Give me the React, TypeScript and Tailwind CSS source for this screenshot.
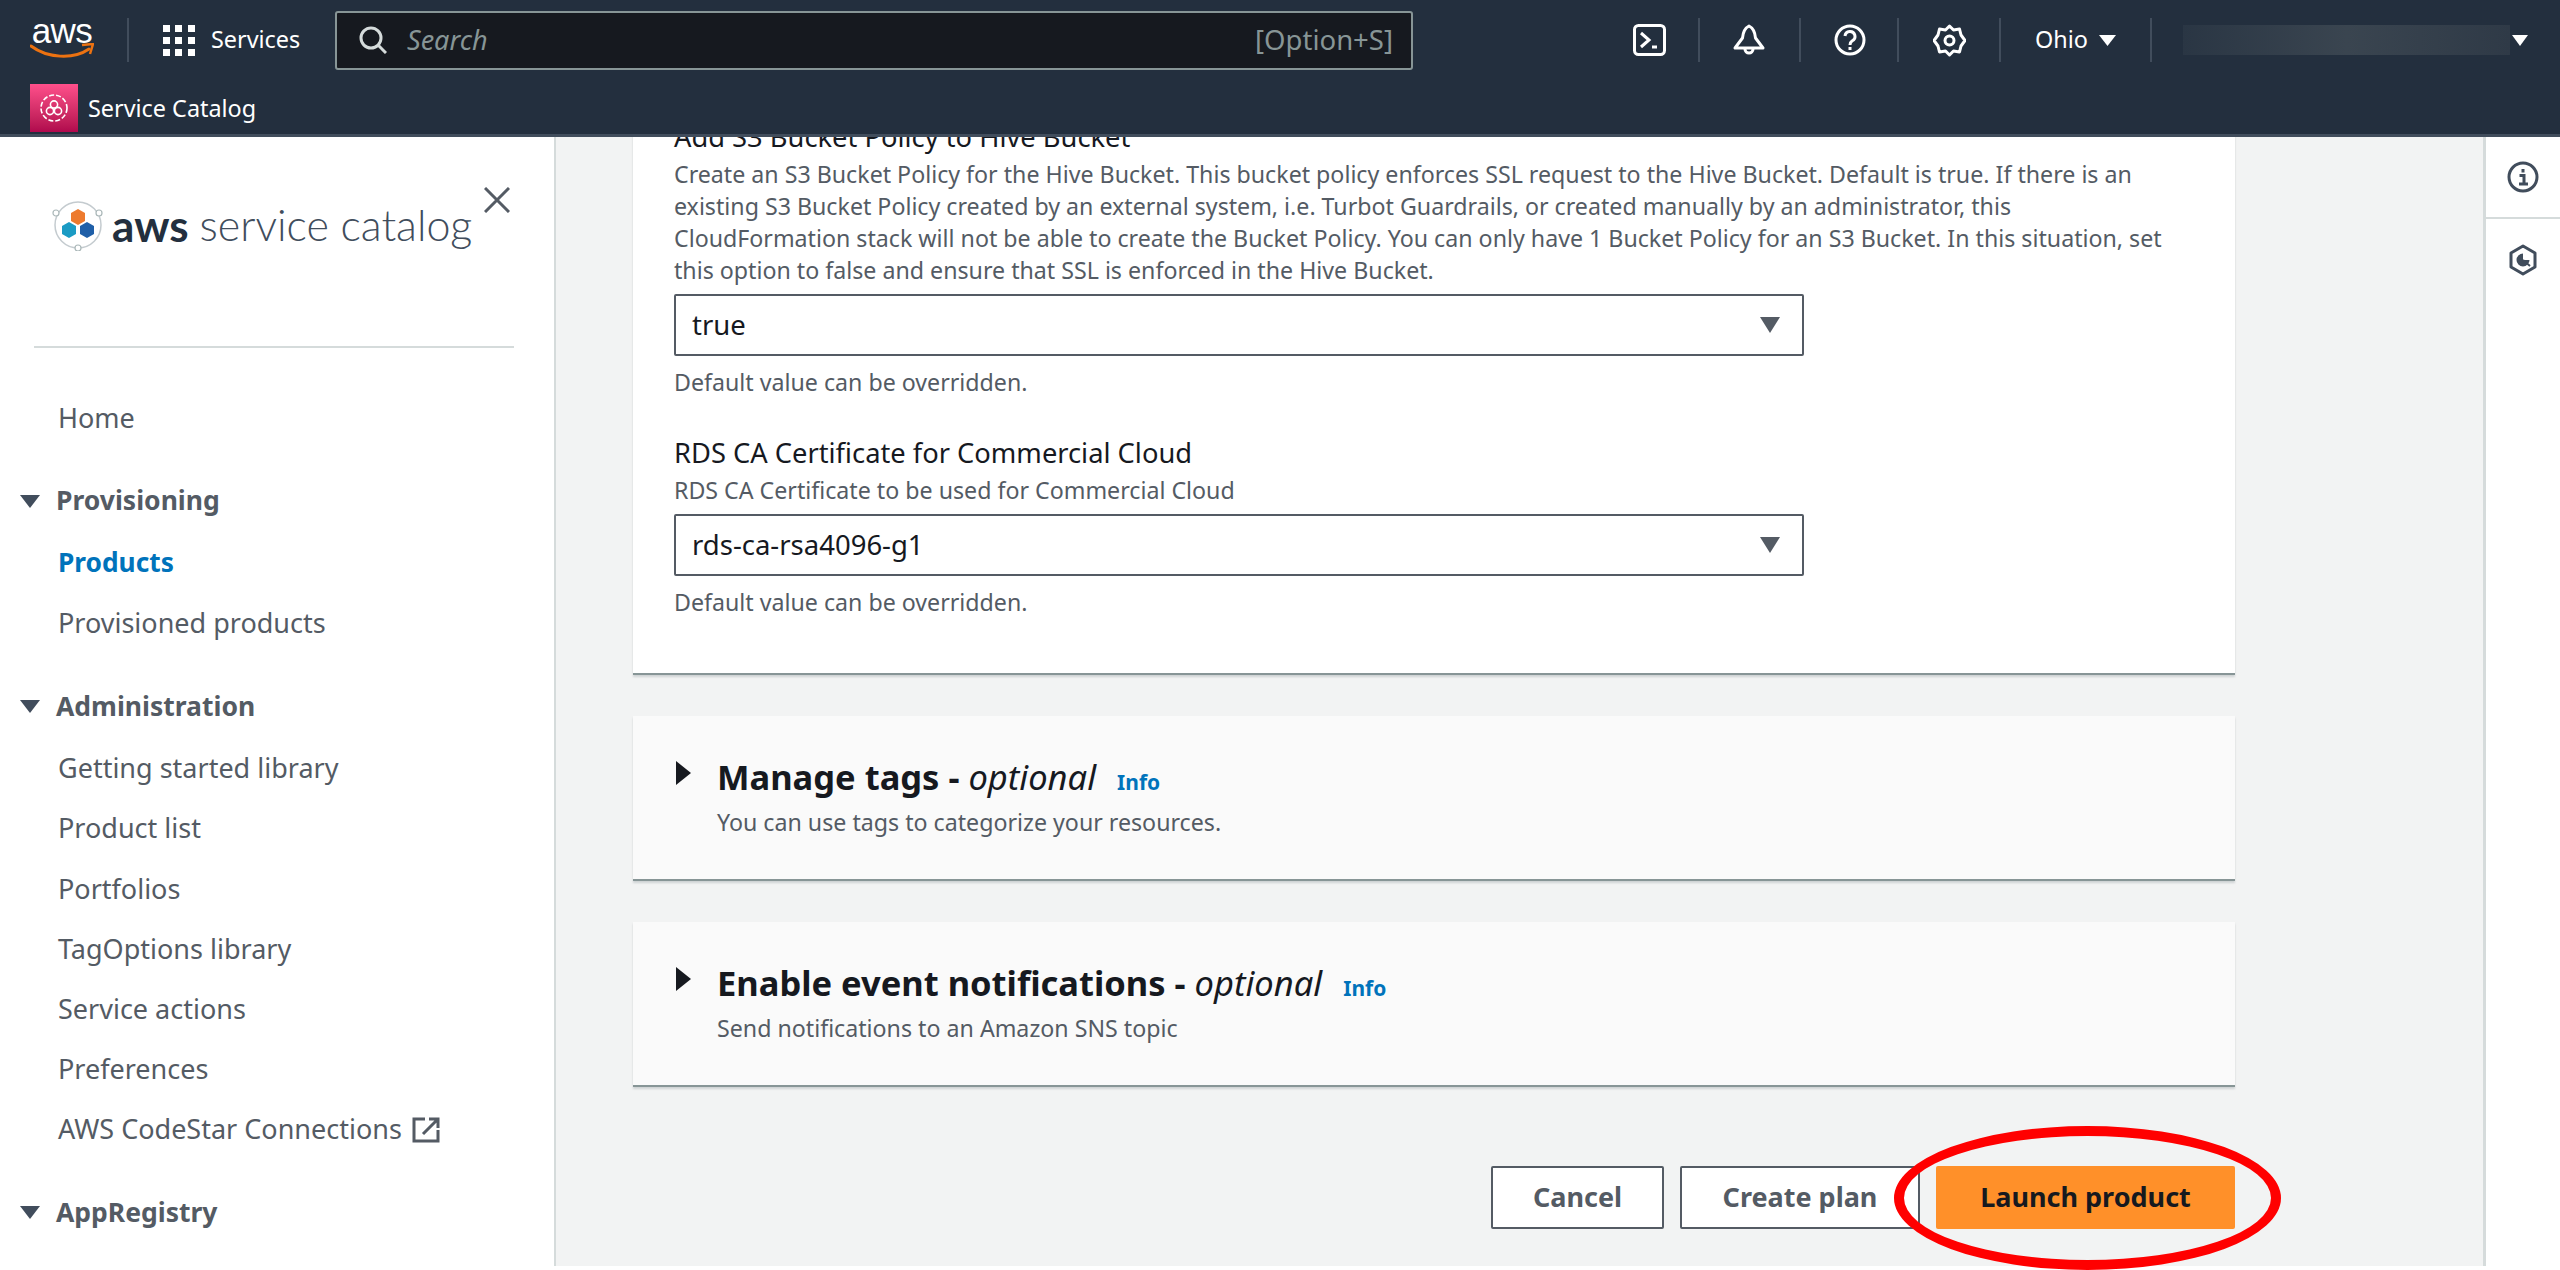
import React from 'react';

const sans = "font-['Noto_Sans',sans-serif]";

const navGroups = [
  { title: 'Provisioning', items: ['Products', 'Provisioned products'] },
  {
    title: 'Administration',
    items: ['Getting started library', 'Product list', 'Portfolios', 'TagOptions library', 'Service actions', 'Preferences', 'AWS CodeStar Connections'],
  },
  { title: 'AppRegistry', items: ['Applications'] },
];

const Caret = ({ className }: { className: string }) => (
  <svg viewBox="0 0 16 10" preserveAspectRatio="none" className={className} fill="currentColor">
    <path d="M0 0h16L8 10z" />
  </svg>
);

const HeaderDivider = () => <div className="w-[2px] h-[44px] bg-[#414d5c]" />;

const AwsLogo = () => (
  <div className="w-[64px] h-[42px] flex flex-col items-center">
    <span className="text-[35px] leading-[24px] h-[24px] tracking-[-0.5px] font-['Liberation_Sans',sans-serif] text-white">aws</span>
    <svg viewBox="0 0 64 18" className="w-[64px] h-[18px]">
      <path d="M1 3c16 12 42 14 58 3" fill="none" stroke="#ec7211" strokeWidth="3" strokeLinecap="round" />
      <path d="M52 2l11-1-3 10" fill="none" stroke="#ec7211" strokeWidth="2.500" />
    </svg>
  </div>
);

const ServiceIcon = () => (
  <div className="w-[48px] h-[48px] bg-gradient-to-t from-[#b0084d] to-[#ff4f8b] flex items-center justify-center">
    <svg viewBox="0 0 32 32" className="w-[32px] h-[32px]" fill="none" stroke="#ffffff" strokeWidth="1.600">
      <circle cx="16" cy="16" r="13" strokeDasharray="5 2" />
      <circle cx="16" cy="12.500" r="3.600" />
      <circle cx="12" cy="19" r="3.600" />
      <circle cx="20" cy="19" r="3.600" />
    </svg>
  </div>
);

const CatalogLogo = () => (
  <svg viewBox="0 0 52 52" className="w-[52px] h-[52px] shrink-0">
    <circle cx="26" cy="26" r="23" fill="none" stroke="#c4cbcf" strokeWidth="1.500" />
    <circle cx="4" cy="14" r="3" fill="#ffffff" stroke="#aab7b8" strokeWidth="1.200" />
    <circle cx="47" cy="14" r="3" fill="#ffffff" stroke="#aab7b8" strokeWidth="1.200" />
    <circle cx="26" cy="49" r="3" fill="#ffffff" stroke="#aab7b8" strokeWidth="1.200" />
    <path d="M26 10l7 4v8l-7 4-7-4v-8z" fill="#ed7a2e" />
    <path d="M17 23l7 4v8l-7 4-7-4v-8z" fill="#1b9bc4" />
    <path d="M35 23l7 4v8l-7 4-7-4v-8z" fill="#1f5fa8" />
  </svg>
);

const Field = ({ label, desc, value }: { label: string; desc: string[]; value: string }) => (
  <div>
    <div className="text-[27.300px] leading-[32px] text-[#16191f] whitespace-nowrap">{label}</div>
    <div className="text-[23.200px] leading-[32px] text-[#545b64] whitespace-nowrap mt-[5px]">
      {desc.map((line) => (
        <div key={line}>{line}</div>
      ))}
    </div>
    <div className="mt-[8px] h-[62px] border-2 border-[#545b64] rounded-[2px] bg-white flex items-center justify-between pl-[16px] pr-[22px] w-[1130px]">
      <span className="text-[27.500px] text-[#16191f]">{value}</span>
      <Caret className="w-[20px] h-[16px] text-[#545b64]" />
    </div>
    <div className="text-[23.200px] leading-[32px] text-[#545b64] mt-[10px]">Default value can be overridden.</div>
  </div>
);

const Expandable = ({ title, sub }: { title: string; sub: string }) => (
  <div className="h-[165px] bg-[#fafafa] border-b-2 border-[#879596] shadow-[0_2px_2px_rgba(0,28,36,0.15)] pl-[43px] pt-[39px] flex">
    <svg viewBox="0 0 10 16" className="w-[15px] h-[24px] mt-[6px] text-[#16191f]" fill="currentColor">
      <path d="M0 0l10 8-10 8z" />
    </svg>
    <div className="ml-[26px]">
      <div className="flex items-baseline whitespace-nowrap">
        <span className="text-[34.500px] leading-[44px] font-bold text-[#16191f]">
          {title} - <em className="font-normal">optional</em>
        </span>
        <span className="ml-[21px] text-[21px] font-bold text-[#0073bb]">Info</span>
      </div>
      <div className="text-[23.200px] leading-[32px] text-[#545b64] mt-[7px]">{sub}</div>
    </div>
  </div>
);

const App: React.FC = () => {
  return (
    <div className={`w-[2560px] h-[1270px] bg-white overflow-hidden relative flex flex-col ${sans}`}>
      <header className="h-[137px] shrink-0 bg-[#232f3e] border-b-[3px] border-[#414d5c] text-white relative z-10">
        <div className="flex items-center h-[80px] pl-[30px]">
          <AwsLogo />
          <div className="ml-[33px]"><HeaderDivider /></div>
          <div className="ml-[34px] grid grid-cols-3 gap-[5px] w-[32px]">
            {Array.from({ length: 9 }).map((_, i) => (
              <div key={i} className="w-[7px] h-[7px] bg-white" />
            ))}
          </div>
          <span className="ml-[16px] text-[23.400px] w-[91px] whitespace-nowrap">Services</span>
          <div className="ml-[33px] w-[1078px] h-[59px] bg-[#16191f] border-2 border-[#879596] rounded-[3px] flex items-center pl-[22px] pr-[18px]">
            <svg viewBox="0 0 28 28" className="w-[28px] h-[28px]" fill="none" stroke="#d5dbdb" strokeWidth="3">
              <circle cx="12" cy="12" r="10" />
              <path d="M19 19l8 8" />
            </svg>
            <span className="ml-[20px] text-[27px] italic text-[#879596]">Search</span>
            <span className="ml-auto text-[27.500px] text-[#879596]">[Option+S]</span>
          </div>
          <div className="ml-[220px] flex items-center">
            <svg viewBox="0 0 33 32" className="w-[33px] h-[32px]" fill="none" stroke="#ffffff" strokeWidth="3">
              <rect x="1.500" y="1.500" width="30" height="29" rx="4" />
              <path d="M8 9l8 7-8 7M19 23h5" />
            </svg>
            <div className="ml-[32px]"><HeaderDivider /></div>
            <svg viewBox="0 0 34 32" className="ml-[32px] w-[34px] h-[32px]" fill="none" stroke="#ffffff" strokeWidth="3">
              <path d="M17 2c-4 2-6 6-6.500 12L3 24h28l-7.500-10C23 8 21 4 17 2z" strokeLinejoin="round" />
              <path d="M13 25a4 4 0 0 0 8 0" />
            </svg>
            <div className="ml-[33px]"><HeaderDivider /></div>
            <svg viewBox="0 0 32 32" className="ml-[33px] w-[32px] h-[32px]" fill="none" stroke="#ffffff" strokeWidth="3">
              <circle cx="16" cy="16" r="14" />
              <path d="M11 12a5 5 0 1 1 7 5c-1.500 1-2 2-2 4" />
              <path d="M16 23v3" />
            </svg>
            <div className="ml-[31px]"><HeaderDivider /></div>
            <svg viewBox="0 0 33 33" className="ml-[34px] w-[33px] h-[33px]" fill="none" stroke="#ffffff" strokeWidth="3">
              <path d="M16.500 2l4 4 6-1 1.500 6 4 5.500-4 5.500-1.500 6-6-1-4 4-4-4-6 1-1.500-6-4-5.500 4-5.500 1.500-6 6 1z" strokeLinejoin="round" />
              <circle cx="16.500" cy="16.500" r="4.500" />
            </svg>
            <div className="ml-[33px]"><HeaderDivider /></div>
            <span className="ml-[34px] text-[23.400px]">Ohio</span>
            <Caret className="ml-[11px] w-[17px] h-[11px] text-white" />
            <div className="ml-[34px]"><HeaderDivider /></div>
            <div className="ml-[31px] w-[327px] h-[30px] bg-gradient-to-r from-[#2a3644] via-[#3a4550] to-[#2f3a47]" />
            <Caret className="ml-[2px] w-[16px] h-[11px] text-white" />
          </div>
        </div>
        <div className="flex items-center pl-[30px] mt-[4px]">
          <ServiceIcon />
          <span className="ml-[10px] mt-[2px] text-[23.400px]">Service Catalog</span>
        </div>
      </header>

      <div className="flex flex-1 min-h-0">
        <aside className="w-[556px] shrink-0 border-r-2 border-[#d5dbdb] bg-white overflow-hidden">
          <div className="h-[209px] relative pl-[52px] pt-[60px]">
            <div className="flex items-center font-['Lato',sans-serif]">
              <CatalogLogo />
              <span className="ml-[8px] text-[44px] leading-[56px] font-bold text-[#232f3e]">aws</span>
              <span className="ml-[11px] text-[43px] leading-[56px] font-light text-[#414d5c] whitespace-nowrap">service catalog</span>
            </div>
            <svg viewBox="0 0 26 26" className="absolute left-[484px] top-[50px] w-[26px] h-[26px]" fill="none" stroke="#545b64" strokeWidth="3">
              <path d="M1 1l24 24M25 1L1 25" />
            </svg>
          </div>
          <div className="ml-[34px] mr-[40px] h-[2px] bg-[#d5dbdb]" />
          <div className="pl-[58px] mt-[40px] h-[60px] text-[27px] text-[#545b64] leading-[60px]">Home</div>
          {navGroups.map((group) => (
            <div key={group.title} className="mt-[23px] first-of-type:mt-[24px]">
              <div className="flex items-center h-[60px] pl-[20px]">
                <Caret className="w-[20px] h-[13px] text-[#414d5c]" />
                <span className="ml-[16px] text-[26.500px] font-bold text-[#545b64]">{group.title}</span>
              </div>
              <div className={group.title === 'AppRegistry' ? 'mt-[5px]' : 'mt-[2px]'}>
                {group.items.map((item) => (
                  <div
                    key={item}
                    className={
                      item === 'Products'
                        ? 'h-[60.200px] pl-[58px] flex items-center text-[26.300px] font-bold text-[#0073bb]'
                        : 'h-[60.200px] pl-[58px] flex items-center text-[27px] text-[#545b64]'
                    }
                  >
                    {item}
                    {item === 'AWS CodeStar Connections' && (
                      <svg viewBox="0 0 28 26" className="ml-[10px] w-[28px] h-[26px]" fill="none" stroke="#545b64" strokeWidth="3">
                        <path d="M13 2H2v22h24V13" />
                        <path d="M11 17L26 2M17 2h9v9" />
                      </svg>
                    )}
                  </div>
                ))}
              </div>
            </div>
          ))}
        </aside>

        <main className="w-[1927px] shrink-0 bg-[#f2f3f3] h-[1129px] overflow-hidden pl-[77px]">
          <div className="w-[1602px] -mt-[26px] flex flex-col">
            <div className="bg-white border-b-2 border-[#879596] shadow-[0_2px_2px_rgba(0,28,36,0.15)] pl-[41px] pt-[10px] h-[564px]">
              <Field
                label="Add S3 Bucket Policy to Hive Bucket"
                desc={[
                  'Create an S3 Bucket Policy for the Hive Bucket. This bucket policy enforces SSL request to the Hive Bucket. Default is true. If there is an',
                  'existing S3 Bucket Policy created by an external system, i.e. Turbot Guardrails, or created manually by an administrator, this',
                  'CloudFormation stack will not be able to create the Bucket Policy. You can only have 1 Bucket Policy for an S3 Bucket. In this situation, set',
                  'this option to false and ensure that SSL is enforced in the Hive Bucket.',
                ]}
                value="true"
              />
              <div className="mt-[39px]">
                <Field
                  label="RDS CA Certificate for Commercial Cloud"
                  desc={['RDS CA Certificate to be used for Commercial Cloud']}
                  value="rds-ca-rsa4096-g1"
                />
              </div>
            </div>
            <div className="mt-[41px]">
              <Expandable title="Manage tags" sub="You can use tags to categorize your resources." />
            </div>
            <div className="mt-[41px]">
              <Expandable title="Enable event notifications" sub="Send notifications to an Amazon SNS topic" />
            </div>
            <div className="mt-[79px] flex justify-end gap-[16px] text-[27px] font-bold">
              <button className="w-[173px] h-[63px] bg-white border-2 border-[#545b64] rounded-[2px] text-[#545b64]">Cancel</button>
              <button className="w-[240px] h-[63px] bg-white border-2 border-[#545b64] rounded-[2px] text-[#545b64]">Create plan</button>
              <button className="w-[299px] h-[63px] bg-[#ff9029] rounded-[2px] text-[#16191f]">Launch product</button>
            </div>
          </div>
        </main>

        <aside className="flex-1 bg-white border-l-[3px] border-[#d5dbdb]">
          <div className="h-[82px] border-b-2 border-[#d5dbdb] flex items-center justify-center">
            <svg viewBox="0 0 32 32" className="w-[32px] h-[32px]" fill="none" stroke="#414d5c" strokeWidth="3">
              <circle cx="16" cy="16" r="14" />
              <path d="M12.500 14.500h4.500v8M12 23h9M16 8v3.500" />
            </svg>
          </div>
          <div className="h-[82px] flex items-center justify-center">
            <svg viewBox="0 0 28 32" className="w-[28px] h-[32px]" fill="none" stroke="#414d5c" strokeWidth="3">
              <path d="M14 2l12 7v14l-12 7-12-7V9z" strokeLinejoin="round" />
              <path d="M14 9.500a6.500 6.500 0 1 0 6.500 6.500H14z" fill="#414d5c" stroke="none" />
              <path d="M14 16l7 6" strokeWidth="2" />
            </svg>
          </div>
        </aside>
      </div>

      {/* red annotation over the primary button */}
      <div className="absolute left-0 bottom-0 w-full h-[4px] bg-white" />
      <div className="absolute left-[1894px] top-[1126px] w-[387px] h-[144px] rounded-[50%] border-[10px] border-[#ff0000]" />
    </div>
  );
};

export default App;
